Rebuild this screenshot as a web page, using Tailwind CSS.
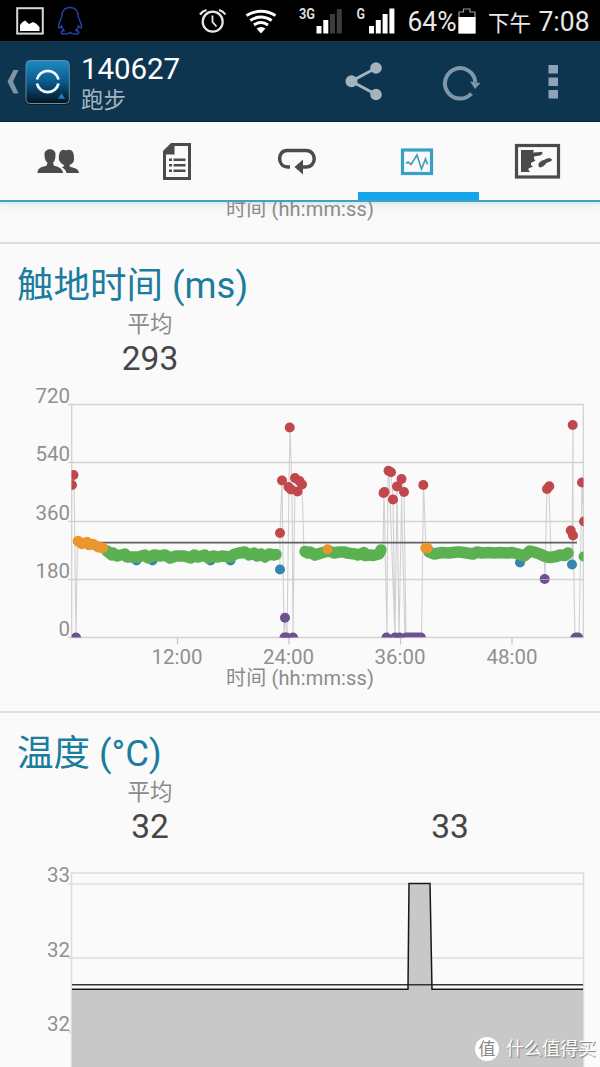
<!DOCTYPE html>
<html lang="zh-CN">
<head>
<meta charset="utf-8">
<meta name="viewport" content="width=device-width">
<title>140627 跑步</title>
<script src="https://cdn.jsdelivr.net/npm/@tailwindcss/browser@4"></script>
</head>
<body class="bg-[#fafafa]">
<div class="relative flex h-[1067px] w-[600px] flex-col overflow-hidden bg-[#fafafa] font-['Roboto','Noto_Sans_CJK_SC',sans-serif]">

  <!-- Status bar -->
  <header class="flex h-[41px] shrink-0 items-center bg-black text-white">
    <svg class="h-[41px] w-[400px] shrink-0" viewBox="0 0 400 41">
      <rect x="17.2" y="8.200" width="25.600" height="25.400" fill="none" stroke="#d8d8d8" stroke-width="2"/>
      <path d="M20 31V25L22 22.500L25 20.500L29 24L33 22L36 23.500L39.500 27V31Z" fill="#fff"/>
      <path d="M70 7.500C64.500 7.500 61.500 11.500 61.700 16.500C61.500 19 58.500 22 58.500 27C58.700 29 60.500 27.500 61.500 26C62 28 63 29.500 64 30.500C60.500 31 60 34 64 34C67 34 69 33.500 70 32.500C71 33.500 73 34 76 34C80 34 79.500 31 76 30.500C77 29.500 78 28 78.500 26C79.500 27.500 81.300 29 81.500 27C81.500 22 78.500 19 78.300 16.500C78.500 11.500 75.500 7.500 70 7.500Z" fill="none" stroke="#2443a0" stroke-width="1.500"/>
      <g fill="none" stroke="#e8e8e8" stroke-width="2.200">
        <circle cx="212.700" cy="21.700" r="10"/>
        <path d="M212.500 15.500V22L216.500 26.500" stroke-width="1.800"/>
        <path d="M200 14.500Q202.500 11 206.500 10M225.400 14.500Q223 11 219 10"/>
      </g>
      <g fill="none" stroke="#fff" stroke-width="3">
        <path d="M246.500 15.500Q261 7 275.500 15.500"/>
        <path d="M250.300 20.500Q261 13.500 271.700 20.500"/>
        <path d="M254 25Q261 20 268 25"/>
      </g>
      <path d="M256.500 28.500Q261 25.500 265.500 28.500L261 33.500Z" fill="#fff"/>
      <text x="299" y="19" font-size="14" font-weight="700" fill="#ddd" textLength="16" lengthAdjust="spacingAndGlyphs">3G</text>
      <path d="M316.500 26h5v7.500h-5zM323.300 20h5v13.500h-5z" fill="#fff"/>
      <path d="M330 14h5v19.500h-5zM336.800 9h5v24.500h-5z" fill="#3c3c3c"/>
      <text x="356.500" y="19" font-size="14" font-weight="700" fill="#ddd" textLength="8.500" lengthAdjust="spacingAndGlyphs">G</text>
      <path d="M369 26h5v7.500h-5zM375.800 20h5v13.500h-5zM382.600 14h5v19.500h-5zM389.400 8.500h5v25h-5z" fill="#fff"/>
    </svg>
    <svg class="h-[41px] w-[200px] shrink-0" viewBox="400 0 200 41">
      <text x="407.500" y="31" font-size="27" fill="#e8e8e8" textLength="49" lengthAdjust="spacingAndGlyphs">64%</text>
      <path d="M459 17V12H463.500V9H470V12H475V33H459Z" fill="none" stroke="#999" stroke-width="1.200"/>
      <path d="M458.500 17H475.500V33.500H458.500Z" fill="#fff"/>
      <text x="488" y="30.500" font-size="21.500" fill="#e8e8e8" textLength="43" lengthAdjust="spacingAndGlyphs">下午</text>
      <text x="538.500" y="30.500" font-size="27" fill="#e8e8e8" textLength="51" lengthAdjust="spacingAndGlyphs">7:08</text>
    </svg>
  </header>

  <!-- Action bar -->
  <nav class="flex h-[81px] shrink-0 items-center border-t border-b border-t-[#1d3446] border-b-[#0b2437] bg-[#0d354f]">
    <svg class="h-[79px] w-[80px] shrink-0" viewBox="0 42 80 79">
      <defs>
        <linearGradient id="app" x1="0" y1="0" x2="0" y2="1">
          <stop offset="0" stop-color="#1d8cc4"/><stop offset=".45" stop-color="#0b5f92"/><stop offset="1" stop-color="#04131f"/>
        </linearGradient>
      </defs>
      <path d="M13.500 70H18.500L13 81.500L18.500 93.500H13.500L7.500 81.500Z" fill="#7e95a6"/>
      <rect x="25.500" y="60" width="44.500" height="45" rx="4" fill="#062030"/>
      <rect x="26" y="60.500" width="43.300" height="43" rx="4" fill="url(#app)" stroke="#6c8ba0" stroke-width="1"/>
      <path d="M37 79.500A11 11 0 0 1 58.500 79.500M37 83.500A11 11 0 0 0 58.500 83.500" fill="none" stroke="#f4faff" stroke-width="2.800"/>
      <path d="M61.500 93L65 98.700H58Z" fill="#2277c4"/>
    </svg>
    <div class="flex w-[260px] flex-col pt-[5px] pl-[1px]">
      <span class="text-[29.500px] leading-[31px] tracking-[-0.1px] text-white">140627</span>
      <span class="text-[22.500px] leading-[30px] text-[#a5b4c0]">跑步</span>
    </div>
    <svg class="h-[79px] w-[260px] shrink-0" viewBox="340 42 260 79">
      <g fill="#a4b3bd" stroke="#a4b3bd">
        <path d="M376 68L351.500 81.300L376 94.500" fill="none" stroke-width="3"/>
        <circle cx="376" cy="68" r="5.800" stroke="none"/><circle cx="351.500" cy="81.300" r="6" stroke="none"/><circle cx="376" cy="94.500" r="5.800" stroke="none"/>
      </g>
      <path d="M471.500 93.500A15.200 15.200 0 1 1 475.300 82" fill="none" stroke="#8196a6" stroke-width="4"/>
      <path d="M470 81.500L480.500 83L475 89Z" fill="#8196a6"/>
      <path d="M548.500 65h9.500v8.500h-9.500zM548.500 77.500h9.500v8.500h-9.500zM548.500 90h9.500v8.500h-9.500z" fill="#8da4b8"/>
    </svg>
  </nav>

  <!-- Tabs -->
  <div class="grid h-[80px] shrink-0 grid-cols-5 border-b-2 border-[#489fbb] bg-[#fafafa] shadow-[0_2px_1px_#d2eef7,0_6px_10px_rgba(120,110,90,0.08)]">
    <svg class="h-[78px] w-[120px]" viewBox="0 122 120 78" fill="#4b4b4b">
      <path d="M37.500 173C37.500 168.500 41 167 46.500 165.800L47.500 163C44.500 160 44.500 157 44.500 154C44.500 147.500 55.500 147.500 55.500 154C55.500 158 55 161 53 163L54 165.800C59.500 167 62.500 169 63 173Z"/>
      <path d="M64.500 165.500C60.500 163 58.500 161 58.800 158C59 152 60.500 150 64 149.700Q66 150.700 68 149.700C73 149.700 74 153 74 158C74.500 162 72 164 69.500 165L70 166.800C75 168 78.500 169 79 173H66.500C66 170 64 168.300 62 167.500Z"/>
    </svg>
    <svg class="h-[78px] w-[120px]" viewBox="120 122 120 78" fill="#4b4b4b">
      <path fill-rule="evenodd" d="M171 143H191V180H163V151ZM174.500 146V154.500H166V177H188V146Z"/>
      <path d="M169 158.500h3v2.500h-3zM173.500 158.500h12v2.500h-12zM169 164h3v2.500h-3zM173.500 164h12v2.500h-12zM169 169.500h3v2.500h-3zM173.500 169.500h12v2.500h-12z"/>
    </svg>
    <svg class="h-[78px] w-[120px]" viewBox="240 122 120 78">
      <path d="M290 167H288C277 167 277 150.500 287 150.500H306C317 150.500 317 167 306 167H300" fill="none" stroke="#4b4b4b" stroke-width="3.500"/>
      <path d="M294.500 167L303 159.500V174.500Z" fill="#4b4b4b"/>
    </svg>
    <div class="flex flex-col items-center">
      <svg class="h-[70px] w-[120px] shrink-0" viewBox="360 122 120 70">
        <rect x="402.500" y="150" width="29" height="23.500" fill="none" stroke="#36a1c5" stroke-width="3.200"/>
        <path d="M406 163.500L408 162L411 164.500L417 155L421.500 169L425.500 159L427.500 164.500" fill="none" stroke="#459bb9" stroke-width="1.700"/>
      </svg>
      <div class="-ml-1 h-[8px] w-[121px] bg-[#14a5e8]"></div>
    </div>
    <svg class="h-[78px] w-[120px]" viewBox="480 122 120 78">
      <rect x="516.500" y="145.500" width="42" height="31.500" fill="none" stroke="#4b4b4b" stroke-width="3.200"/>
      <path d="M521 150H534L533 152.500Q538 152.500 542 151.800Q543.500 154 540 155.500L534 156.500V159L535.500 160.500L531 163V165L533 166.500L528.500 168.500V170L530 172H521ZM539 167C537 163 541 160.500 544 160C547 158 550.500 157.500 552 159.500C552 162 548 161.500 546 163.500C544 166 541 168.500 539 167Z" fill="#4b4b4b"/>
    </svg>
  </div>

  <!-- Tail of the previous chart -->
  <div class="h-[42px] shrink-0 border-b-2 border-[#dfdfdf]">
    <svg class="h-[40px] w-[600px]" viewBox="0 202 600 40">
      <text x="226" y="216" font-size="20" fill="#8b8b8b" textLength="148">时间 (hh:mm:ss)</text>
    </svg>
  </div>

  <!-- Ground contact time -->
  <section class="flex h-[469px] shrink-0 flex-col border-b-2 border-[#dfdfdf]">
    <h2 class="mt-[18px] h-[48px] pl-[17px] text-[36.500px] leading-[48px] text-[#1b7c9e]">触地时间 (ms)</h2>
    <div class="grid h-[70px] grid-cols-2 text-center">
      <div class="flex flex-col">
        <span class="h-[28px] text-[22.500px] leading-[29px] text-[#8b8b8b]">平均</span>
        <span class="h-[40px] text-[33.500px] leading-[41px] text-[#464646]">293</span>
      </div>
    </div>
    <svg class="h-[331px] w-[600px] shrink-0" viewBox="0 380 600 331">
      <defs><clipPath id="plot"><rect x="71.500" y="404" width="512" height="233.500"/></clipPath></defs>
      <path d="M68 404.500H583.500M68 462.500H583.500M68 521.500H583.500M68 579.500H583.500M68 637.500H583.500M71.700 404V637.500M583.300 404V637.500" stroke="#d2d2d2" stroke-width="1.300" fill="none"/>
      <path d="M177.500 638V644.500M289 638V644.500M400.500 638V644.500M512 638V644.500" stroke="#c4c4c4" stroke-width="1.200"/>
      <g fill="#909090" font-size="20.500" text-anchor="end">
        <text x="70" y="402.500">720</text><text x="70" y="461">540</text><text x="70" y="519.500">360</text><text x="70" y="578">180</text><text x="70" y="636">0</text>
      </g>
      <g fill="#909090" font-size="20.500" text-anchor="middle">
        <text x="177" y="664">12:00</text><text x="288.500" y="664">24:00</text><text x="400" y="664">36:00</text><text x="512" y="664">48:00</text>
      </g>
      <text x="226" y="684.500" font-size="20" fill="#8b8b8b" textLength="148">时间 (hh:mm:ss)</text>
      <g clip-path="url(#plot)">
        <path d="M72 485L74 475L76 637L77.500 541M280 555V570L280 533L282 480L284 637L285 618L287 637L289 487L290 428L292 490L293 637L295 478L302 484L304 552M383 549L384 492L387 637L388 471L391 473L393 499L395 637L397 487L399 637L402 479L404 492L406 637H421.500L423.500 485L426 548M544 553L545 579L547 488L549 486L551 556M571 553L572 565L573 425L573 535L575 637H579L582 482L584 521V557M389 471L395 637M401 479L405 637" stroke="#d0d0d0" stroke-width="1.100" fill="none"/>
        <path d="M73 542.700H577" stroke="#616161" stroke-width="1.700"/>
        <g fill="#3585ad">
          <circle cx="136.500" cy="560.500" r="5"/><circle cx="152.500" cy="560.500" r="5"/><circle cx="210.500" cy="560.500" r="5"/><circle cx="230.500" cy="560.500" r="5"/><circle cx="280" cy="569.500" r="5"/><circle cx="520" cy="562.500" r="5"/><circle cx="572" cy="564.500" r="5"/>
        </g>
        <g fill="none" stroke="#5bb151" stroke-width="11.500" stroke-linecap="round" stroke-linejoin="round">
          <path d="M107 551L112 555L113 553L117 556L125 554L127 557L130 557L138 557L145 555L148 558L154 555L160 556L165 555L170 558L176 556L184 556L191 558L194 555L198 557L205 555L208 558L213 556L218 557L222 556L230 557L235 554L239 553L245 552L249 555L254 553L257 556L261 554L265 557L269 554L274 555L276 554.500"/>
          <path d="M305 551.500L308 553L310 552L315 555L321 553L325 552L329 551L334 553L339 552L345 552L347 553L355 554L358 555L364 552.500L365 555.500L371 555L373 555.500L379 554L381 550"/>
          <path d="M429 552L434 554L442 552.500L449 553L457 552L460 552L467 553L473 554L477 552L482 553L488 552.500L495 553L500 552.500L507 553L512 552.500L518 554L524 556L530 551L534 552L540 554L544 556L547 557L550 557.500L556 556.500L560 555L565 555.500L568 553"/>
        </g>
        <circle cx="583.500" cy="556.500" r="5" fill="#5bb151"/>
        <path d="M78 541L82 544L87 542L89 545L93 544L98 547L103 548" fill="none" stroke="#ea962f" stroke-width="10.500" stroke-linecap="round" stroke-linejoin="round"/>
        <path d="M425.500 548H427.500" stroke="#ea962f" stroke-width="10.500" stroke-linecap="round"/>
        <circle cx="327.500" cy="549.300" r="5" fill="#ea962f"/>
        <g fill="#c2474c">
          <circle cx="72" cy="485" r="5"/><circle cx="73.500" cy="475" r="5"/>
          <circle cx="280" cy="533" r="5"/><circle cx="282" cy="480.500" r="5"/><circle cx="289.700" cy="427.500" r="5"/><circle cx="288.500" cy="487" r="5"/><circle cx="291" cy="489.500" r="5"/><circle cx="295" cy="478" r="5"/><circle cx="297.500" cy="491.500" r="5"/><circle cx="299.500" cy="481" r="5"/><circle cx="302" cy="484.500" r="5"/>
          <circle cx="383.500" cy="493" r="5"/><circle cx="384.500" cy="492" r="5"/><circle cx="388.500" cy="470.700" r="5"/><circle cx="391" cy="472.300" r="5"/><circle cx="393" cy="499.500" r="5"/><circle cx="397" cy="486.500" r="5"/><circle cx="401.500" cy="479" r="5"/><circle cx="404" cy="492" r="5"/><circle cx="423.300" cy="485" r="5"/>
          <circle cx="547" cy="489" r="5"/><circle cx="549.300" cy="486.300" r="5"/><circle cx="572.700" cy="425" r="5"/><circle cx="570.700" cy="530.500" r="5"/><circle cx="573" cy="535.500" r="5"/><circle cx="582" cy="482.500" r="5"/><circle cx="584" cy="521.500" r="5"/>
        </g>
        <g fill="#6c5090">
          <circle cx="285" cy="617.700" r="5"/><circle cx="544.700" cy="579" r="5"/><circle cx="76" cy="637.500" r="5"/><circle cx="284.500" cy="637.500" r="5"/><circle cx="286.500" cy="637.500" r="5"/><circle cx="293" cy="637.500" r="5"/><circle cx="386.500" cy="637.500" r="5"/><circle cx="395" cy="637.500" r="5"/><circle cx="399.500" cy="637.500" r="5"/>
          <path d="M400 637.500Q402 632.500 406 632.500H421Q425 632.500 426 637.500ZM570 637.500Q572 632.500 576 632.500H578Q582 632.500 583.500 637.500Z"/>
        </g>
        <path d="M540 579.500H550" stroke="#a594bb" stroke-width="1"/>
      </g>
    </svg>
  </section>

  <!-- Temperature -->
  <section class="flex h-[354px] shrink-0 flex-col">
    <h2 class="mt-[17px] h-[48px] pl-[17px] text-[36.500px] leading-[48px] text-[#1b7c9e]">温度 (°C)</h2>
    <div class="grid h-[70px] grid-cols-2 text-center">
      <div class="flex flex-col">
        <span class="h-[28px] text-[22.500px] leading-[29px] text-[#8b8b8b]">平均</span>
        <span class="h-[40px] text-[33.500px] leading-[41px] text-[#464646]">32</span>
      </div>
      <div class="flex flex-col pt-[28px]">
        <span class="h-[40px] text-[33.500px] leading-[41px] text-[#464646]">33</span>
      </div>
    </div>
    <svg class="h-[219px] w-[600px] shrink-0" viewBox="0 848 600 219">
      <path d="M71.500 1067V873H583.500V1067" fill="none" stroke="#dcdcdc" stroke-width="1.500"/>
      <path d="M68 884H583.500M68 958H583.500M68 1032H72" stroke="#dedede" stroke-width="1.500"/>
      <path d="M72 989.300H408L409 883.500H430L432 989.300H583V1067H72Z" fill="#c8c8c8"/>
      <path d="M72 984.800H583" stroke="#333" stroke-width="1.600"/>
      <path d="M72 989.300H408L409 883.500H430L432 989.300H583" fill="none" stroke="#181818" stroke-width="1.500"/>
      <g fill="#909090" font-size="20.500" text-anchor="end">
        <text x="70" y="882">33</text><text x="70" y="956.500">32</text><text x="70" y="1030.500">32</text>
      </g>
    </svg>
  </section>

  <!-- Watermark over the page corner -->
  <div class="absolute bottom-[3px] left-[475px] flex h-[30px] items-center gap-[7px] whitespace-nowrap text-white">
    <span class="flex size-[24px] items-center justify-center rounded-full bg-white text-[17px] leading-none text-[#888]">值</span>
    <span class="text-[18px] leading-[28px] [text-shadow:1px_1px_1px_#777]">什么值得买</span>
  </div>
</div>
</body>
</html>
